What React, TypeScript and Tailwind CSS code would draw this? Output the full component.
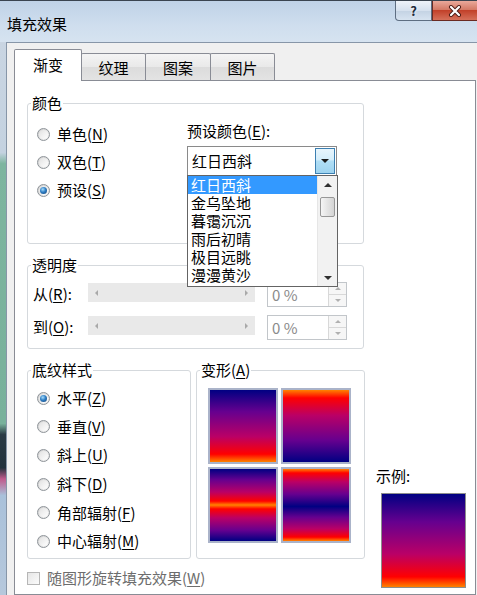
import React from "react";

const Acc = ({ t, k }: { t: string; k: string }) => (
  <span className="whitespace-nowrap">
    {t}(<u className="underline underline-offset-[2px]">{k}</u>)
  </span>
);

function Radio({ checked }: { checked?: boolean }) {
  return (
    <span className="w-[13px] h-[13px] rounded-full border border-[#8e9499] bg-[linear-gradient(135deg,#cfcfcf,#f6f6f6)] flex items-center justify-center shrink-0">
      <span className="w-[9px] h-[9px] rounded-full bg-[linear-gradient(135deg,#e2e2e2,#ffffff)] flex items-center justify-center">
        {checked && (
          <span className="w-[7px] h-[7px] rounded-full bg-[radial-gradient(circle_at_40%_35%,#a6dcfb_0%,#2f7ec4_45%,#123f72_100%)]" />
        )}
      </span>
    </span>
  );
}

function RadioRow({ t, k, checked, h }: { t: string; k: string; checked?: boolean; h: string }) {
  return (
    <div className={`flex items-center gap-[7px] ${h}`}>
      <Radio checked={checked} />
      <Acc t={t} k={k} />
    </div>
  );
}

const TriUp = () => (
  <span className="w-0 h-0 border-l-[4px] border-r-[4px] border-b-[4px] border-l-transparent border-r-transparent border-b-[#303030]" />
);
const TriDown = () => (
  <span className="w-0 h-0 border-l-[4px] border-r-[4px] border-t-[4px] border-l-transparent border-r-transparent border-t-[#303030]" />
);

function Slider() {
  return (
    <div className="w-[167px] h-[19px] bg-[#e9e9e9] flex items-center justify-between px-[7px] mt-[1px]">
      <span className="w-0 h-0 border-t-[3px] border-b-[3px] border-r-[3px] border-t-transparent border-b-transparent border-r-[#a9a9a9]" />
      <span className="w-0 h-0 border-t-[3px] border-b-[3px] border-l-[3px] border-t-transparent border-b-transparent border-l-[#a9a9a9]" />
    </div>
  );
}

function Spin() {
  return (
    <div className="ml-[12px] w-[80px] h-[25px] border border-[#c2c6ca] bg-white flex items-center">
      <span className="flex-1 pl-[4px] text-[#8a8a8a]">0 %</span>
      <div className="w-[18px] h-full flex flex-col border-l border-[#d8d8d8]">
        <div className="flex-1 flex items-center justify-center border-b border-[#d8d8d8] bg-[#f6f6f6]">
          <span className="w-0 h-0 border-l-[3px] border-r-[3px] border-b-[3px] border-l-transparent border-r-transparent border-b-[#b0b0b0]" />
        </div>
        <div className="flex-1 flex items-center justify-center bg-[#f6f6f6]">
          <span className="w-0 h-0 border-l-[3px] border-r-[3px] border-t-[3px] border-l-transparent border-r-transparent border-t-[#b0b0b0]" />
        </div>
      </div>
    </div>
  );
}

const items = ["红日西斜", "金乌坠地", "暮霭沉沉", "雨后初晴", "极目远眺", "漫漫黄沙"];

export default function App() {
  return (
    <div className="w-[477px] h-[595px] overflow-hidden flex flex-col font-['Noto_Sans_CJK_SC','Microsoft_YaHei',sans-serif] text-[15px] leading-[18px] text-black bg-[#c8d7e6]">
      {/* title bar */}
      <div className="h-[42px] shrink-0 flex items-start justify-between border-t border-[#3a4450] bg-[linear-gradient(to_bottom,#bfd2e7,#cfdeee_60%,#d6e3f0)]">
        <div className="pl-[7px] pt-[14px] text-[15px]">填充效果</div>
        <div className="flex">
          <div className="w-[37px] h-[20px] rounded-bl-[4px] border border-t-0 border-[#5e6e82] bg-[linear-gradient(to_bottom,#eef3f9,#d6e1ee_50%,#c3d2e3_51%,#d7e3f0)] flex items-center justify-center text-[13px] font-bold text-[#1c2a3a] [text-shadow:0_0_3px_#fff]">
            ?
          </div>
          <div className="w-[45px] h-[20px] border-b border-l border-[#6a2a22] bg-[linear-gradient(to_bottom,#e9a99b,#d47a66_45%,#c2412a_50%,#d5705a)] flex items-center justify-center">
            <svg width="14" height="12" viewBox="0 0 14 12">
              <path d="M3 2 L11 10 M11 2 L3 10" stroke="#4a1a14" strokeWidth="4" strokeLinecap="round" />
              <path d="M3 2 L11 10 M11 2 L3 10" stroke="#ffffff" strokeWidth="2.2" strokeLinecap="round" />
            </svg>
          </div>
        </div>
      </div>
      {/* body */}
      <div className="flex-1 flex">
        <div className="w-[6px] shrink-0 bg-[linear-gradient(to_bottom,#c9d5e2_0%,#c4d2e0_20%,#7db59f_22%,#78b19b_69%,#2a3a44_71%,#22323c_77%,#c05a8c_79%,#a9c1da_82%,#b6c8dc_100%)]" />
        <div className="flex-1 bg-[#f0f0f0] border-l border-t border-[#8796a8] pt-[6px] pl-[7px] flex flex-col">
          {/* tabs */}
          <div className="h-[31px] shrink-0 flex items-end">
            <div className="relative z-10 w-[68px] h-[32px] -mb-px bg-white border border-b-0 border-[#898c95] rounded-t-[2px] flex justify-center pt-[6px]">
              渐变
            </div>
            {["纹理", "图案", "图片"].map((t, i) => (
              <div
                key={t}
                className={`${i === 1 ? "w-[66px]" : "w-[65px]"} h-[27px] -ml-px border border-b-0 border-[#898c95] rounded-t-[2px] bg-[linear-gradient(to_bottom,#f4f4f4,#e9e9e9_50%,#dcdcdc_51%,#e3e3e3)] flex justify-center pt-[5px]`}
              >
                {t}
              </div>
            ))}
          </div>
          {/* panel */}
          <div className="flex-1 w-[462px] bg-white border border-[#898c95] pt-[13px] pl-[12px] flex flex-col">
            {/* color */}
            <fieldset className="shrink-0 w-[337px] h-[150px] border border-[#d5d9dd] rounded-[3px]">
              <legend className="ml-[3px] px-[1px]">颜色</legend>
              <div className="flex">
                <div className="w-[159px] pl-[9px] pt-[8px] flex flex-col">
                  <RadioRow t="单色" k="N" h="h-[28px]" />
                  <RadioRow t="双色" k="T" h="h-[28px]" />
                  <RadioRow t="预设" k="S" h="h-[28px]" checked />
                </div>
                <div className="pt-[10px] flex flex-col">
                  <div className="h-[18px]">
                    <Acc t="预设颜色" k="E" />:
                  </div>
                  <div className="relative z-20 mt-[6px] w-[150px] h-[30px] border border-[#8a8a8a] bg-white flex items-center">
                    <span className="flex-1 pl-[4px]">红日西斜</span>
                    <div className="w-[20px] h-[26px] mr-[1px] border border-[#3c7fb1] bg-[linear-gradient(to_bottom,#e8f5fc,#d4edfa_45%,#b0def5_50%,#9dd3ef)] flex items-center justify-center">
                      <span className="w-0 h-0 border-l-[4px] border-r-[4px] border-t-[4px] border-l-transparent border-r-transparent border-t-[#1a1a1a]" />
                    </div>
                    {/* dropdown list */}
                    <div className="absolute left-[-1px] top-[28px] w-[151px] h-[112px] border border-[#646464] bg-white flex">
                      <div className="flex-1 flex flex-col">
                        {items.map((t, i) => (
                          <div
                            key={t}
                            className={`h-[18px] pl-[3px] flex items-center ${i === 0 ? "bg-[#3399ff] text-white" : ""}`}
                          >
                            {t}
                          </div>
                        ))}
                      </div>
                      <div className="w-[20px] bg-[#f2f2f2] border-l border-[#e6e6e6] flex flex-col">
                        <div className="h-[17px] flex items-center justify-center">
                          <TriUp />
                        </div>
                        <div className="mt-[4px] mx-[2px] h-[20px] rounded-[2px] border border-[#979797] bg-[linear-gradient(to_right,#f5f5f5,#e4e4e4_50%,#d4d4d4)]" />
                        <div className="flex-1" />
                        <div className="h-[17px] flex items-center justify-center">
                          <TriDown />
                        </div>
                      </div>
                    </div>
                  </div>
                </div>
              </div>
            </fieldset>
            {/* transparency */}
            <fieldset className="shrink-0 mt-[12px] w-[337px] h-[93px] border border-[#d5d9dd] rounded-[3px]">
              <legend className="ml-[3px] px-[1px]">透明度</legend>
              <div className="pl-[5px] pt-[8px] flex flex-col gap-[8px]">
                <div className="h-[25px] flex items-start">
                  <span className="w-[55px] pt-[3px]">
                    <Acc t="从" k="R" />:
                  </span>
                  <Slider />
                  <Spin />
                </div>
                <div className="h-[25px] flex items-start">
                  <span className="w-[55px] pt-[3px]">
                    <Acc t="到" k="O" />:
                  </span>
                  <Slider />
                  <Spin />
                </div>
              </div>
            </fieldset>
            {/* bottom row */}
            <div className="shrink-0 mt-[12px] h-[198px] flex items-start">
              <fieldset className="w-[164px] h-[198px] border border-[#d5d9dd] rounded-[3px]">
                <legend className="ml-[3px] px-[1px]">底纹样式</legend>
                <div className="pl-[9px] pt-[5px] flex flex-col">
                  <RadioRow t="水平" k="Z" h="h-[28.6px]" checked />
                  <RadioRow t="垂直" k="V" h="h-[28.6px]" />
                  <RadioRow t="斜上" k="U" h="h-[28.6px]" />
                  <RadioRow t="斜下" k="D" h="h-[28.6px]" />
                  <RadioRow t="角部辐射" k="F" h="h-[28.6px]" />
                  <RadioRow t="中心辐射" k="M" h="h-[28.6px]" />
                </div>
              </fieldset>
              <fieldset className="ml-[5px] w-[169px] h-[198px] border border-[#d5d9dd] rounded-[3px]">
                <legend className="ml-[3px] px-[1px]">
                  <Acc t="变形" k="A" />
                </legend>
                <div className="pl-[11px] pt-[9px] grid grid-cols-[70px_70px] grid-rows-[76px_76px] gap-[3px]">
                  <div className="border-2 border-[#aab3c9] bg-[linear-gradient(to_bottom,#000082_0%,#66008f_30%,#ba0066_64.7%,#ff0000_89%,#ff8200_100%)]" />
                  <div className="border-2 border-[#aab3c9] bg-[linear-gradient(to_top,#000082_0%,#66008f_30%,#ba0066_64.7%,#ff0000_89%,#ff8200_100%)]" />
                  <div className="border-2 border-[#aab3c9] bg-[linear-gradient(to_bottom,#000082_0%,#66008f_15%,#ba0066_32%,#ff0000_44.5%,#ff8200_50%,#ff0000_55.5%,#ba0066_68%,#66008f_85%,#000082_100%)]" />
                  <div className="border-2 border-[#aab3c9] bg-[linear-gradient(to_bottom,#ff8200_0%,#ff0000_5.5%,#ba0066_18%,#66008f_35%,#000082_52%,#66008f_67%,#ba0066_83%,#ff0000_94.5%,#ff8200_100%)]" />
                </div>
              </fieldset>
              <div className="ml-[11px] pt-[106px] flex flex-col">
                <div className="h-[18px]">示例:</div>
                <div className="ml-[5px] mt-[8px] w-[85px] h-[95px] border border-[#8d8d8d] bg-[linear-gradient(to_bottom,#000082_0%,#66008f_30%,#ba0066_64.7%,#ff0000_89%,#ff8200_100%)]" />
              </div>
            </div>
            {/* checkbox */}
            <div className="shrink-0 mt-[10px] h-[18px] flex items-center gap-[7px] text-[#6d6d6d]">
              <span className="w-[13px] h-[13px] border border-[#b6b6b6] bg-[linear-gradient(135deg,#e6e6e6,#fbfbfb)]" />
              <Acc t="随图形旋转填充效果" k="W" />
            </div>
          </div>
        </div>
      </div>
    </div>
  );
}
